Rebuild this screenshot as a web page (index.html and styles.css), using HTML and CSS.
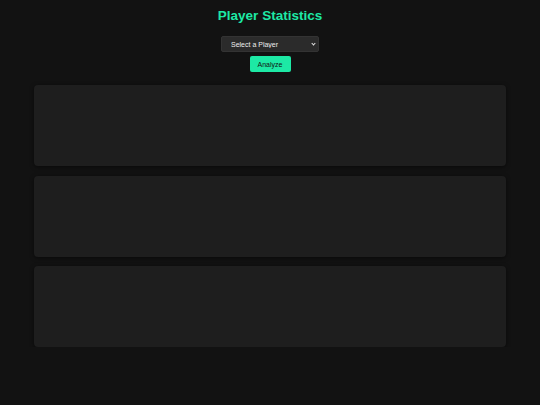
FILE: index.html
```html
<!DOCTYPE html>
<html>
<head>
<meta charset="utf-8">
<link rel="stylesheet" href="styles.css">
</head>
<body>
<div class="page">
  <h1 class="title">Player Statistics</h1>
  <div class="controls">
    <div class="select-wrap">
      <select class="player-select">
        <option>Select a Player</option>
      </select>
    </div>
    <button class="analyze-btn">Analyze</button>
  </div>
  <div class="cards">
    <div class="card"></div>
    <div class="card"></div>
    <div class="card"></div>
  </div>
</div>
</body>
</html>
```
FILE: styles.css
```css
html, body {
  margin: 0;
  padding: 0;
  background: #121212;
  font-family: "Liberation Sans", Arial, sans-serif;
  color: #e0e0e0;
}
.page {
  width: 472px;
  margin: 0 auto;
  padding-top: 7px;
}
.title {
  margin: 0;
  font-size: 13.5px;
  line-height: 18px;
  font-weight: bold;
  text-align: center;
  color: #1de9a5;
}
.controls {
  display: flex;
  flex-direction: column;
  align-items: center;
  gap: 4px;
  margin-top: 11px;
}
.select-wrap {
  position: relative;
  width: 98px;
  height: 16px;
}
.select-wrap::after {
  content: "";
  position: absolute;
  right: 4px;
  top: 6px;
  width: 2px;
  height: 2px;
  border-right: 1px solid #e6e6e6;
  border-bottom: 1px solid #e6e6e6;
  transform: rotate(45deg);
  pointer-events: none;
}
.player-select {
  display: block;
  box-sizing: border-box;
  appearance: none;
  -webkit-appearance: none;
  width: 98px;
  height: 16px;
  padding: 0 0 0 9px;
  margin: 0;
  font-family: "Liberation Sans", Arial, sans-serif;
  font-size: 7px;
  color: #eeeeee;
  background: #2b2b2b;
  border: 1px solid #333333;
  border-radius: 2px;
}
.analyze-btn {
  display: block;
  width: 41px;
  height: 16px;
  padding: 0;
  font-family: "Liberation Sans", Arial, sans-serif;
  font-size: 7px;
  color: #121212;
  background: #1de9a5;
  border: none;
  border-radius: 2px;
}
.cards {
  display: flex;
  flex-direction: column;
  gap: 9.5px;
  margin-top: 13px;
}
.card {
  height: 81px;
  background: #1e1e1e;
  border-radius: 4px;
  box-shadow: 0 1px 4px rgba(0,0,0,0.5);
}
```
